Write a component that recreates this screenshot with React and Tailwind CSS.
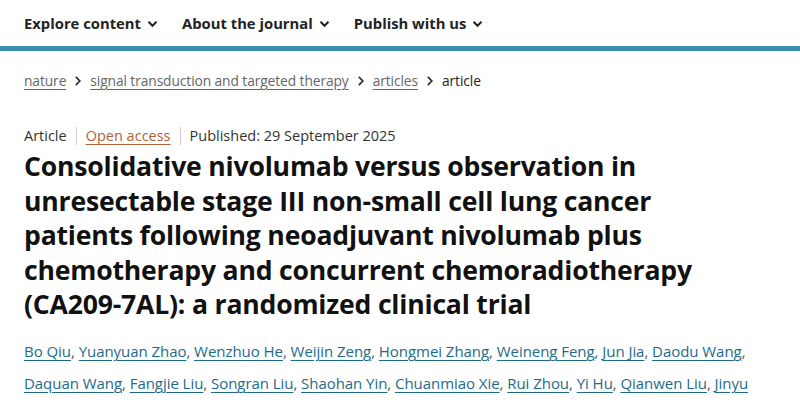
import React from "react";

const Chev = () => (
  <svg width="11" height="8" viewBox="0 0 11 8" className="ml-[6px] mt-[1px]">
    <path d="M1.5 1.8 L5.5 5.8 L9.5 1.8" fill="none" stroke="#222" strokeWidth="2" />
  </svg>
);

const Sep = () => (
  <svg width="8" height="12" viewBox="0 0 8 12" className="mx-[8px]">
    <path d="M1.8 1.8 L5.8 6 L1.8 10.2" fill="none" stroke="#333" strokeWidth="1.8" />
  </svg>
);

const authors1 = ["Bo Qiu", "Yuanyuan Zhao", "Wenzhuo He", "Weijin Zeng", "Hongmei Zhang", "Weineng Feng", "Jun Jia", "Daodu Wang"];
const authors2 = ["Daquan Wang", "Fangjie Liu", "Songran Liu", "Shaohan Yin", "Chuanmiao Xie", "Rui Zhou", "Yi Hu", "Qianwen Liu", "Jinyu"];

export default function App() {
  return (
    <div className="w-[800px] h-[400px] overflow-hidden bg-white text-[#222]" style={{ fontFamily: '"Open Sans", "Noto Sans", sans-serif' }}>
      <div className="h-[46px] flex items-center pl-[24px] gap-[24px] font-bold text-[14.8px] text-[#222]">
        <div className="flex items-center">Explore content<Chev /></div>
        <div className="flex items-center">About the journal<Chev /></div>
        <div className="flex items-center">Publish with us<Chev /></div>
      </div>
      <div className="h-[5px] bg-[#3a8fb0]" />
      <div className="px-[24px]">
        <div className="mt-[18px] flex items-center text-[13.8px] tracking-[-0.1px] text-[#666] h-[24px]">
          <span className="underline underline-offset-[3px]">nature</span>
          <Sep />
          <span className="underline underline-offset-[3px]">signal transduction and targeted therapy</span>
          <Sep />
          <span className="underline underline-offset-[3px]">articles</span>
          <Sep />
          <span className="text-[#222]">article</span>
        </div>
        <div className="mt-[32px] flex items-center text-[14.5px] h-[22px] text-[#333]">
          <span>Article</span>
          <span className="mx-[9px] w-px h-[18px] bg-[#ccc]" />
          <span className="text-[#b0623a] underline underline-offset-[3px]">Open access</span>
          <span className="mx-[9px] w-px h-[18px] bg-[#ccc]" />
          <span>Published: 29 September 2025</span>
        </div>
        <h1 className="mt-[2px] font-bold text-[26.6px] leading-[34.6px] text-[#111] tracking-[-0.2px] w-[680px]">
          Consolidative nivolumab versus observation in unresectable stage III non-small cell lung cancer patients following neoadjuvant nivolumab plus chemotherapy and concurrent chemoradiotherapy (CA209-7AL): a randomized clinical trial
        </h1>
        <div className="mt-[13px] text-[15px] tracking-[-0.05px] leading-[32px] text-[#555]">
          <div className="whitespace-nowrap">
            {authors1.map((a, i) => (
              <React.Fragment key={a}>
                <span className="text-[#1d6b87] underline underline-offset-[3px]">{a}</span>{i < authors1.length - 1 ? ", " : ","}
              </React.Fragment>
            ))}
          </div>
          <div className="whitespace-nowrap">
            {authors2.map((a, i) => (
              <React.Fragment key={a}>
                <span className="text-[#1d6b87] underline underline-offset-[3px]">{a}</span>{i < authors2.length - 1 ? ", " : ""}
              </React.Fragment>
            ))}
          </div>
        </div>
      </div>
    </div>
  );
}
